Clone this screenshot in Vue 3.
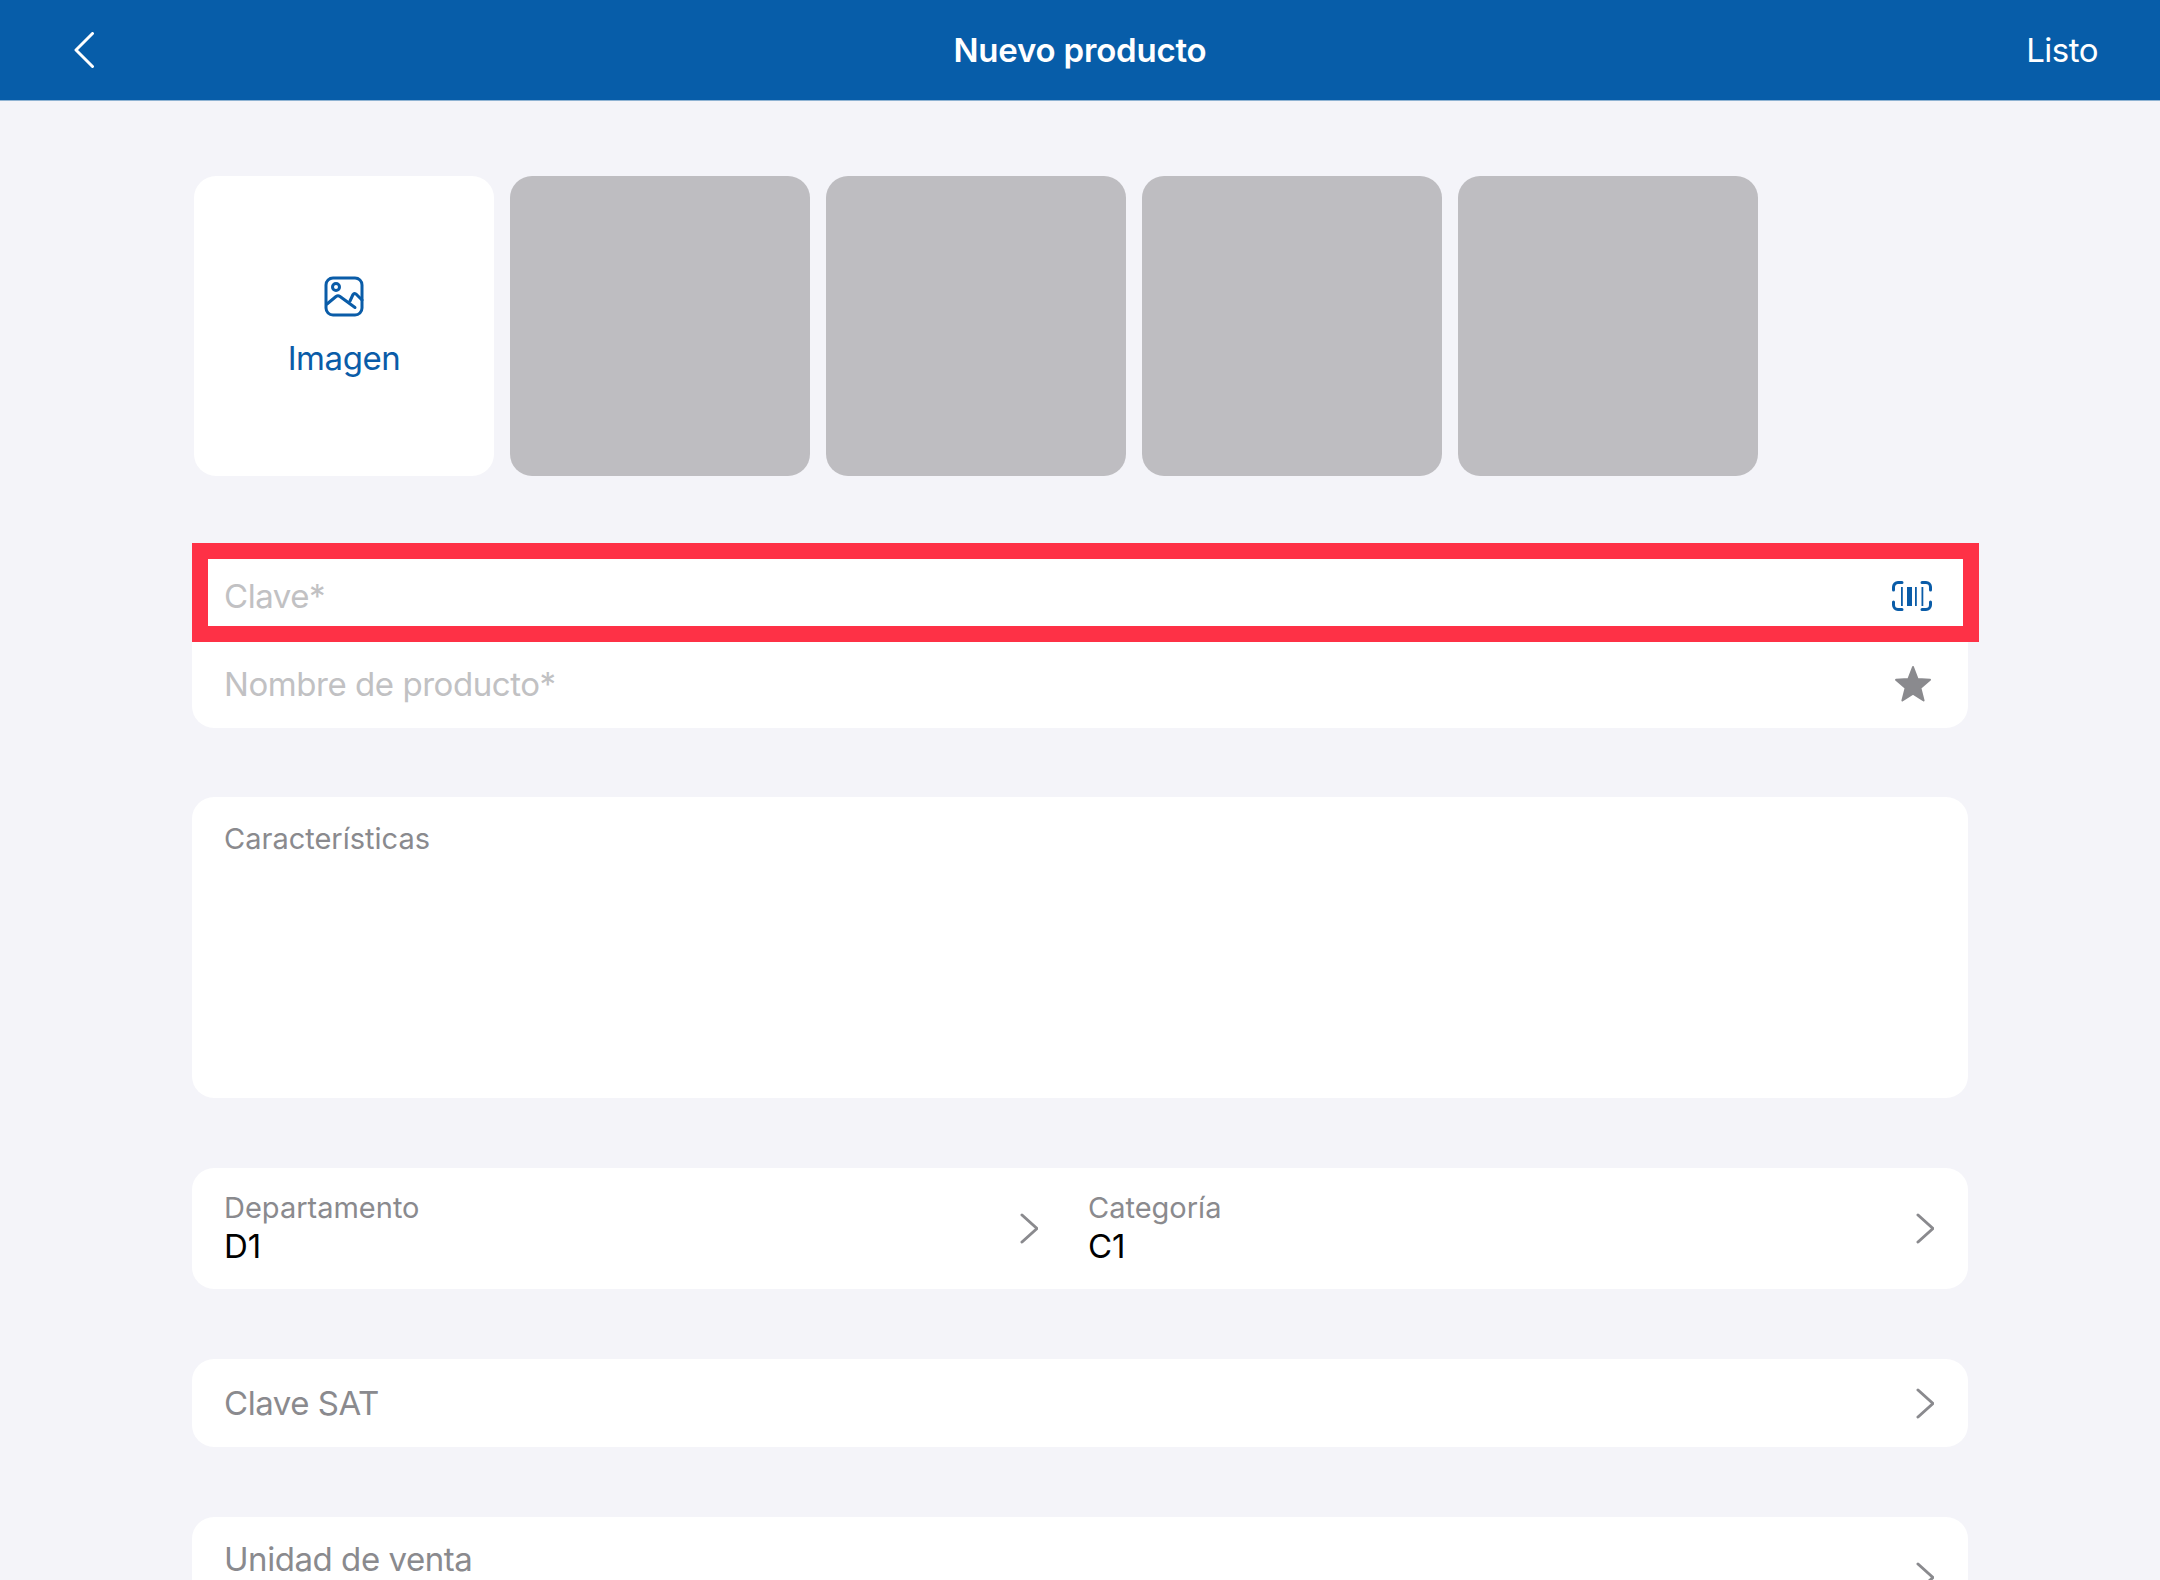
<template>
  <div class="page">
    <header class="top-bar">
      <div class="top-left">
        <svg class="back-icon" width="22" height="36" viewBox="0 0 22 36">
          <path d="M19.5 1.5 3 18l16.500 16.500" />
        </svg>
      </div>
      <div class="top-title">Nuevo producto</div>
      <div class="top-right">Listo</div>
    </header>

    <main class="content">
      <div class="tiles">
        <div class="tile tile-add">
          <svg width="40" height="41" viewBox="0 0 40 41" class="image-icon">
            <rect x="2" y="2" width="36" height="37" rx="7" />
            <circle cx="12" cy="11" r="3.500" />
            <path d="M3 28 12 20.500Q14 19 16 20.500L31 31.500" />
            <path d="M26 25 29 18.500Q30 17 32 18L38 24" />
          </svg>
          <span class="tile-label">Imagen</span>
        </div>
        <div v-for="n in 4" :key="n" class="tile tile-empty"></div>
      </div>

      <section class="card form-card">
        <div class="row">
          <span class="placeholder">Clave*</span>
          <svg class="barcode-icon" width="40" height="30" viewBox="0 0 40 30">
            <path class="corner" d="M10 1.500H6A4.500 4.500 0 0 0 1.500 6v3M30 1.500h4A4.500 4.500 0 0 1 38.500 6v3M10 28.500H6A4.500 4.500 0 0 1 1.500 24v-3M30 28.500h4a4.500 4.500 0 0 0 4.500-4.500v-3" />
            <rect x="9" y="6" width="1.800" height="19" />
            <rect x="15" y="6" width="5" height="19" />
            <rect x="23" y="6" width="1.800" height="19" />
            <rect x="29.500" y="6" width="1.800" height="19" />
          </svg>
        </div>
        <div class="row">
          <span class="placeholder">Nombre de producto*</span>
          <svg class="star-icon" width="38" height="38" viewBox="0 0 38 38">
            <path d="M19 2 23.600 14 36 14.800 26.400 23 29.600 35.500 19 28.700 8.400 35.500 11.600 23 2 14.800 14.400 14Z" />
          </svg>
        </div>
        <div class="highlight"></div>
      </section>

      <section class="card notes-card">
        <span class="notes-label">Características</span>
      </section>

      <section class="card double-card">
        <div v-for="item in pickers" :key="item.label" class="picker" :class="item.cls">
          <div class="picker-text">
            <span class="picker-label">{{ item.label }}</span>
            <span class="picker-value">{{ item.value }}</span>
          </div>
          <svg class="chevron" width="18" height="31" viewBox="0 0 18 31">
            <path d="M2 2l15 13.500L2 29" />
          </svg>
        </div>
      </section>

      <section class="card single-card">
        <span class="single-label">Clave SAT</span>
        <svg class="chevron" width="18" height="31" viewBox="0 0 18 31">
          <path d="M2 2l15 13.500L2 29" />
        </svg>
      </section>

      <section class="card unit-card">
        <span class="single-label">Unidad de venta</span>
        <svg class="chevron" width="18" height="31" viewBox="0 0 18 31">
          <path d="M2 2l15 13.500L2 29" />
        </svg>
      </section>
    </main>
  </div>
</template>

<script setup>
const pickers = [
  { label: 'Departamento', value: 'D1', cls: 'picker-left' },
  { label: 'Categoría', value: 'C1', cls: 'picker-right' }
]
</script>

<style>
html,
body {
  margin: 0;
  background: #f4f4f9;
}
</style>

<style scoped>
.page {
  width: 2160px;
  height: 1580px;
  overflow: hidden;
  background: #f4f4f9;
  font-family: Inter, "Noto Sans", sans-serif;
}

.top-bar {
  display: grid;
  grid-template-columns: 1fr auto 1fr;
  align-items: center;
  height: 100px;
  padding: 0 62px;
  background: #075da9;
  border-bottom: 1px solid #8fb3d3;
  color: #fff;
}

.back-icon {
  display: block;
  margin-left: 11px;
}

.back-icon path {
  fill: none;
  stroke: #fff;
  stroke-width: 3;
  stroke-linecap: round;
  stroke-linejoin: round;
}

.top-title {
  font-size: 33px;
  font-weight: 600;
  letter-spacing: -0.2px;
}

.top-right {
  font-size: 33px;
  letter-spacing: -0.5px;
  text-align: right;
}

.content {
  display: flex;
  flex-direction: column;
  padding: 75px 0 0 192px;
  width: 1776px;
}

.tiles {
  display: flex;
  gap: 16px;
  padding-left: 2px;
}

.tile {
  width: 300px;
  height: 300px;
  border-radius: 22px;
}

.tile-add {
  display: flex;
  flex-direction: column;
  align-items: center;
  background: #fff;
  padding-top: 100px;
  box-sizing: border-box;
}

.tile-empty {
  background: #bebdc1;
}

.image-icon {
  display: block;
}

.image-icon rect,
.image-icon circle,
.image-icon path {
  fill: none;
  stroke: #0a5ca8;
  stroke-width: 3;
  stroke-linecap: round;
  stroke-linejoin: round;
}

.tile-label {
  margin-top: 21px;
  font-size: 33px;
  line-height: 40px;
  letter-spacing: -0.45px;
  color: #0a5ca8;
}

.card {
  background: #fff;
  border-radius: 22px;
}

.form-card {
  position: relative;
  margin-top: 76px;
}

.row {
  display: flex;
  align-items: center;
  justify-content: space-between;
  height: 88px;
  padding: 0 36px 0 32px;
}

.placeholder {
  font-size: 33px;
  letter-spacing: -0.45px;
  color: #c1c1c3;
}

.barcode-icon {
  display: block;
}

.barcode-icon .corner {
  fill: none;
  stroke: #0a5ca8;
  stroke-width: 3;
  stroke-linecap: round;
}

.barcode-icon rect {
  fill: #0a5ca8;
}

.star-icon {
  display: block;
}

.star-icon path {
  fill: #8a8a8e;
  stroke: #8a8a8e;
  stroke-width: 2;
  stroke-linejoin: round;
}

.highlight {
  position: absolute;
  left: 0;
  top: -9px;
  width: 1787px;
  height: 99px;
  box-sizing: border-box;
  border: 16px solid #fe3146;
}

.notes-card {
  margin-top: 69px;
  height: 301px;
  padding: 24px 32px 0;
  box-sizing: border-box;
}

.notes-label {
  font-size: 29px;
  line-height: 36px;
  color: #8a8a8e;
}

.double-card {
  display: flex;
  margin-top: 70px;
  height: 121px;
}

.picker {
  display: flex;
  align-items: center;
  justify-content: space-between;
}

.picker-left {
  width: 846px;
  padding-left: 32px;
  box-sizing: border-box;
}

.picker-right {
  flex: 1;
  padding-left: 50px;
  padding-right: 34px;
}

.picker-text {
  display: flex;
  flex-direction: column;
  margin-top: -3px;
}

.picker-label {
  font-size: 29px;
  line-height: 38px;
  color: #8a8a8e;
}

.picker-value {
  font-size: 33px;
  line-height: 38px;
  color: #000;
}

.chevron {
  display: block;
  flex-shrink: 0;
}

.chevron path {
  fill: none;
  stroke: #8a8a8e;
  stroke-width: 3;
  stroke-linecap: round;
  stroke-linejoin: round;
}

.single-card {
  display: flex;
  align-items: center;
  justify-content: space-between;
  margin-top: 70px;
  height: 88px;
  padding: 0 34px 0 32px;
}

.single-label {
  font-size: 33px;
  letter-spacing: -0.45px;
  color: #8a8a8e;
}

.unit-card {
  display: flex;
  align-items: center;
  justify-content: space-between;
  margin-top: 70px;
  height: 121px;
  padding: 0 34px 0 32px;
}

.unit-card .single-label {
  align-self: flex-start;
  margin-top: 22px;
}
</style>
